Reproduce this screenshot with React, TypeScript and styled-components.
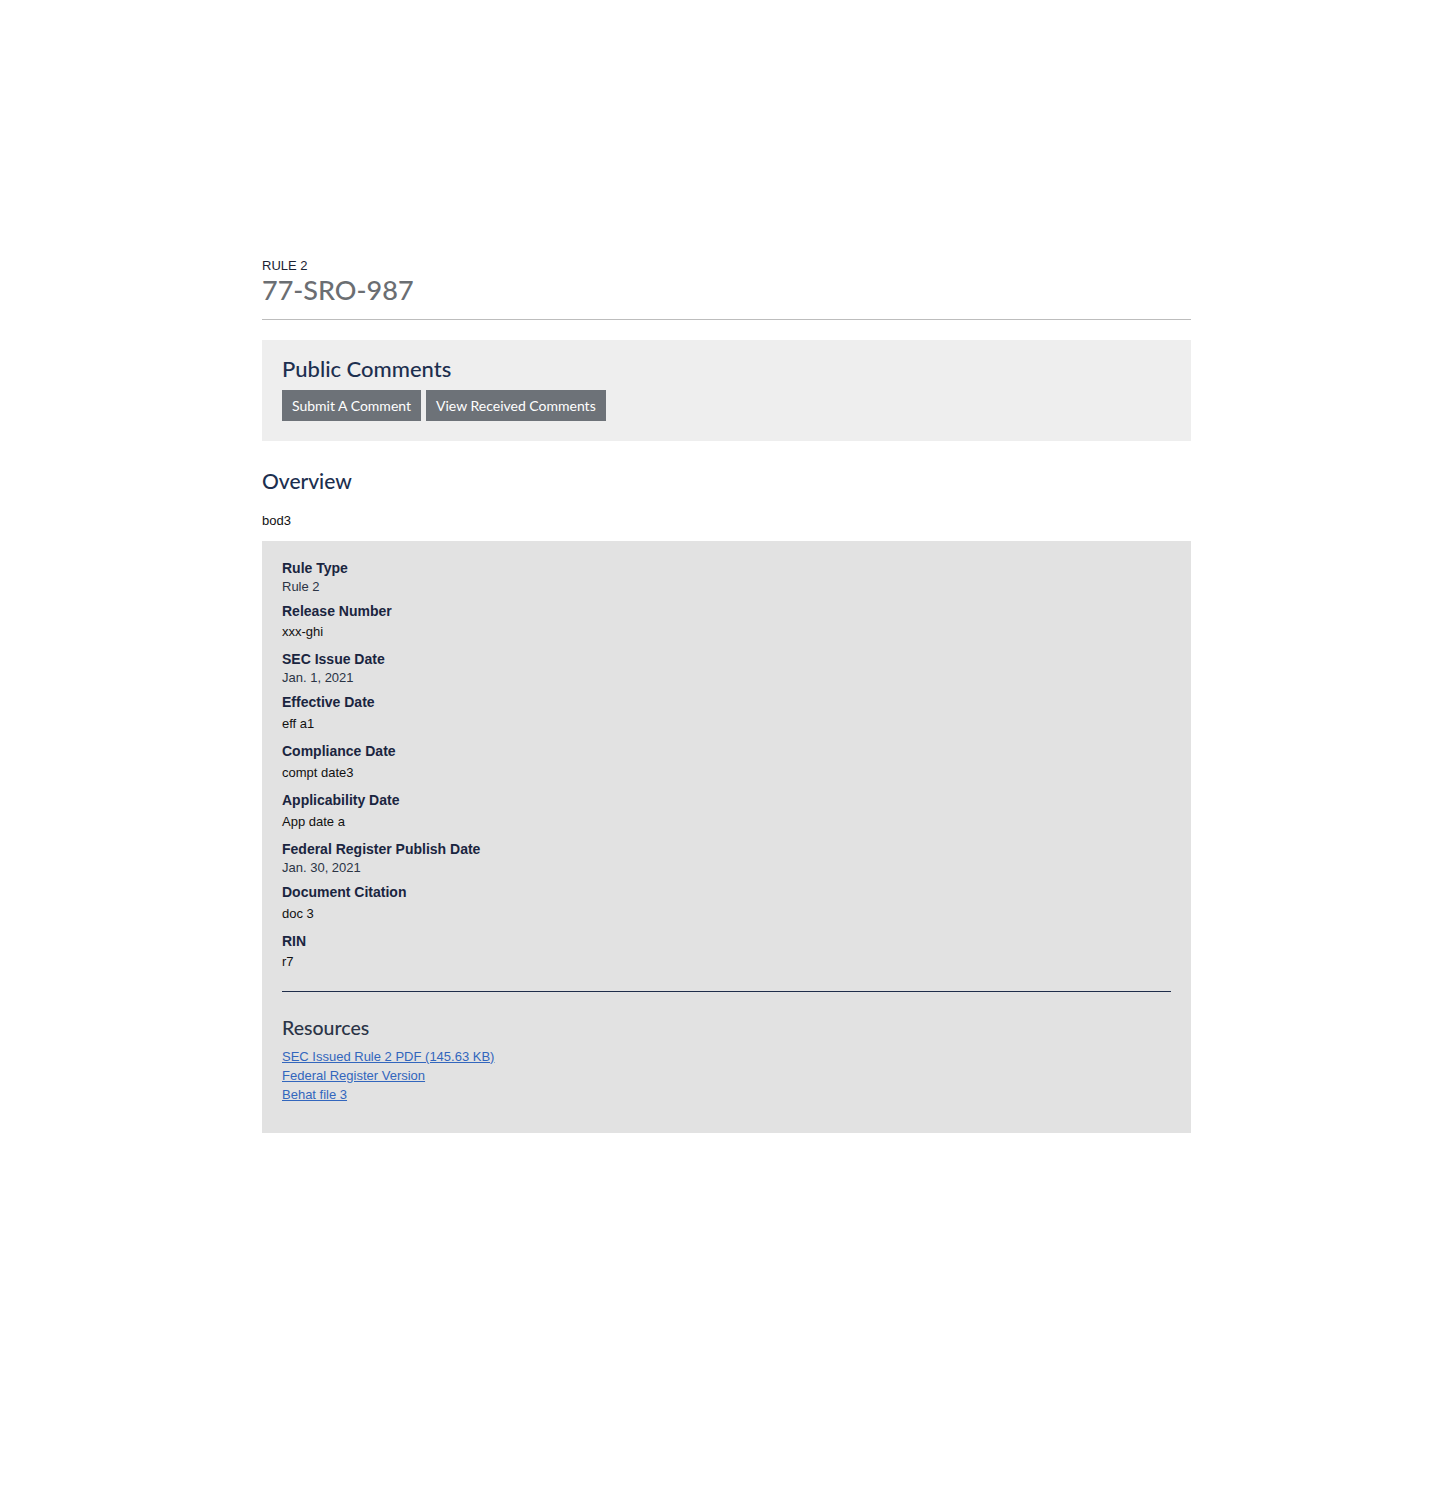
import React from "react";
import styled, { createGlobalStyle } from "styled-components";

const Global = createGlobalStyle`
  html, body { margin: 0; padding: 0; background: #fff; }
  body { font-family: "Liberation Sans", Arial, sans-serif; font-size: 13px; color: #111; }
`;

const Page = styled.main`
  width: 929px;
  padding: 258px 0 200px 262px;
`;

const Eyebrow = styled.div`
  font-size: 13px;
  line-height: 15px;
  color: #1c2333;
  text-transform: uppercase;
`;

const Title = styled.h1`
  margin: 0;
  font-family: "Lato", "Open Sans", sans-serif;
  font-weight: 500;
  font-size: 27px;
  line-height: 34px;
  color: #6b6e72;
`;

const Rule = styled.hr<{ $dark?: boolean }>`
  border: 0;
  height: 1px;
  margin: ${(p) => (p.$dark ? "16px 0 0" : "12px 0 20px")};
  background: ${(p) => (p.$dark ? "#1f2d4a" : "#bdbdbd")};
`;

const CommentBox = styled.section`
  background: #eeeeee;
  padding: 17px 20px 20px;
`;

const Heading = styled.h2<{ $size?: number; $color?: string }>`
  margin: 0;
  font-family: "Lato", "Open Sans", sans-serif;
  font-weight: 500;
  font-size: ${(p) => p.$size ?? 21}px;
  line-height: 24px;
  color: ${(p) => p.$color ?? "#1c2f4f"};
`;

const ButtonRow = styled.div`
  display: flex;
  gap: 5px;
  margin-top: 9px;
`;

const Button = styled.a`
  display: inline-flex;
  align-items: center;
  height: 31px;
  padding: 0 10px;
  background: #6d7278;
  color: #fff;
  font-family: "Lato", "Open Sans", sans-serif;
  font-size: 14px;
  text-decoration: none;
  cursor: pointer;
`;

const OverviewHeading = styled(Heading)`
  margin-top: 27px;
  line-height: 26px;
`;

const Body = styled.p`
  margin: 19px 0 13px;
  line-height: 15px;
  font-size: 13px;
`;

const DetailBox = styled.section`
  background: #e2e2e2;
  padding: 18px 20px 29px;
`;

const DetailList = styled.dl`
  display: flex;
  flex-direction: column;
  gap: 5px;
  margin: 0;
`;

const Item = styled.div``;

const Label = styled.dt`
  font-weight: 700;
  font-size: 14px;
  line-height: 18px;
  color: #1a2540;
`;

const Value = styled.dd<{ $para?: number }>`
  margin: ${(p) => (p.$para ? `${p.$para}px 0 3px` : "0")};
  font-size: 13px;
  line-height: 20px;
  color: ${(p) => (p.$para ? "#111" : "#2b3445")};
`;

const ResourcesHeading = styled(Heading)`
  margin-top: 24px;
`;

const Links = styled.ul`
  list-style: none;
  margin: 7px 0 0;
  padding: 0;
`;

const LinkItem = styled.li`
  line-height: 19px;
`;

const Link = styled.a`
  color: #3266bd;
  text-decoration: underline;
  font-size: 13px;
`;

const details: { label: string; value: string; para?: number }[] = [
  { label: "Rule Type", value: "Rule 2" },
  { label: "Release Number", value: "xxx-ghi", para: 2 },
  { label: "SEC Issue Date", value: "Jan. 1, 2021" },
  { label: "Effective Date", value: "eff a1", para: 3 },
  { label: "Compliance Date", value: "compt date3", para: 3 },
  { label: "Applicability Date", value: "App date a", para: 3 },
  { label: "Federal Register Publish Date", value: "Jan. 30, 2021" },
  { label: "Document Citation", value: "doc 3", para: 3 },
  { label: "RIN", value: "r7", para: 2 },
];

const resources = [
  "SEC Issued Rule 2 PDF (145.63 KB)",
  "Federal Register Version",
  "Behat file 3",
];

export default function App() {
  return (
    <>
      <Global />
      <Page>
        <Eyebrow>Rule 2</Eyebrow>
        <Title>77-SRO-987</Title>
        <Rule />
        <CommentBox>
          <Heading $size={22}>Public Comments</Heading>
          <ButtonRow>
            <Button>Submit A Comment</Button>
            <Button>View Received Comments</Button>
          </ButtonRow>
        </CommentBox>
        <OverviewHeading>Overview</OverviewHeading>
        <Body>bod3</Body>
        <DetailBox>
          <DetailList>
            {details.map((d) => (
              <Item key={d.label}>
                <Label>{d.label}</Label>
                <Value $para={d.para}>{d.value}</Value>
              </Item>
            ))}
          </DetailList>
          <Rule $dark />
          <ResourcesHeading $size={19.5} $color="#2b3447">
            Resources
          </ResourcesHeading>
          <Links>
            {resources.map((r) => (
              <LinkItem key={r}>
                <Link href="#">{r}</Link>
              </LinkItem>
            ))}
          </Links>
        </DetailBox>
      </Page>
    </>
  );
}
